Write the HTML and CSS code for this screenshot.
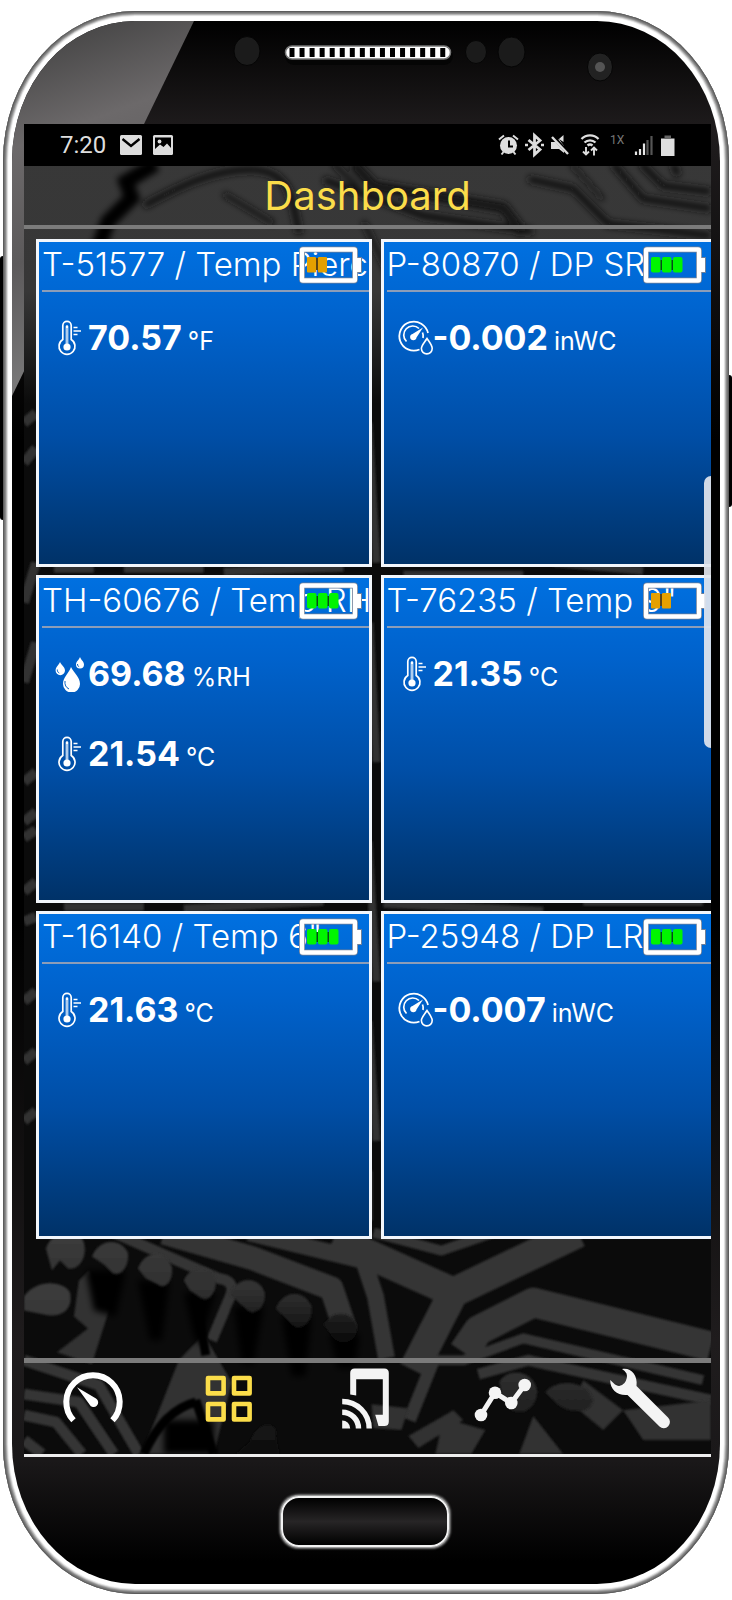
FILE: index.html
```html
<!DOCTYPE html>
<html lang="en">
<head>
<meta charset="utf-8">
<meta name="viewport" content="width=device-width, initial-scale=1">
<title>Dashboard</title>
<link rel="stylesheet" href="styles.css">
</head>
<body>
<svg class="defs" aria-hidden="true">
  <symbol id="thermo" viewBox="0 0 36 36">
    <path d="M10.800 19.500V5.500a4.200 4.200 0 0 1 8.400 0V19.500a8 8 0 1 1-8.400 0Z" fill="none" stroke="#fff" stroke-width="1.700"/>
    <path d="M15 27V6.500" fill="none" stroke="#fff" stroke-width="2.600" stroke-linecap="round"/>
    <path d="M15 24V8" fill="none" stroke="#3b85d6" stroke-width=".8"/>
    <circle cx="15" cy="27" r="3.600" fill="#fff"/>
    <path d="M21.500 7.500h4M21.500 11h7.500M21.500 14.500h4" stroke="#fff" stroke-width="1.500"/>
  </symbol>
  <symbol id="pressure" viewBox="0 0 36 36">
    <path d="M31 13A14.500 14.500 0 1 0 22.500 29.500" fill="none" stroke="#fff" stroke-width="1.800"/>
    <path d="M9.500 21.500A9 9 0 0 1 22 8.500M25.500 12.500A9 9 0 0 1 26 18" fill="none" stroke="#fff" stroke-width="1.700"/>
    <path d="M26 7.500 19.500 17.500A3.200 3.200 0 1 1 15.500 14Z" fill="#fff"/>
    <path d="M30 18.500C33 23 35.200 25.500 35.200 28.500a5.400 5.400 0 0 1-10.800 0C24.400 25.500 27 23 30 18.500Z" fill="none" stroke="#fff" stroke-width="1.600"/>
  </symbol>
  <symbol id="drops" viewBox="0 0 36 36">
    <path d="M19 11c3 6 9 10 9 17a8.500 8.500 0 0 1-17 0c0-7 6-11 8-17Z" fill="#fff"/>
    <path d="M8 6c1 3 5 5 5 8.500a4.700 4.700 0 0 1-9.400 0C3.600 11 7 9 8 6Z" fill="#fff"/>
    <path d="M28 1c1 3 4 4.500 4 7.500a4 4 0 0 1-8 0C24 5.500 27 4 28 1Z" fill="#fff"/>
    <path d="M13 25c-.5 4 1 6.500 4 8M5.300 13.500c0 2 .7 3 2 3.600M25.500 8c0 1.500.6 2.300 1.600 2.700" fill="none" stroke="#0560c4" stroke-width="1"/>
  </symbol>
  <symbol id="battery" viewBox="0 0 64 38">
    <rect x="3" y="3.500" width="53" height="31" rx="1" fill="none" stroke="#6e7f98" stroke-width="6"/>
    <path d="M57 11.500h5.500v15H57Z" fill="#fff" stroke="#6e7f98" stroke-width="1"/>
    <rect x="3" y="3.500" width="53" height="31" rx="1" fill="none" stroke="#fff" stroke-width="4.400"/>
    <path d="M56 12h6v14h-6Z" fill="#fff"/>
  </symbol>
  <symbol id="full" viewBox="0 0 64 38">
    <path d="M10 14h28v10H10Z" fill="#06491a"/>
    <rect x="8" y="11" width="9.500" height="15.500" rx="2" fill="#00f500"/>
    <rect x="19" y="11" width="9.500" height="15.500" rx="2" fill="#00f500"/>
    <rect x="30" y="11" width="9.500" height="15.500" rx="2" fill="#00f500"/>
  </symbol>
  <symbol id="half" viewBox="0 0 64 38">
    <path d="M10 12h16v12H10Z" fill="#5c4414"/>
    <rect x="8" y="11" width="9" height="15.500" rx="1" fill="#e5a000"/>
    <rect x="19" y="11" width="9" height="15.500" rx="1" fill="#e5a000"/>
  </symbol>
</svg>

<div class="device">
  <span class="side-key side-key-left"></span>
  <span class="side-key side-key-right"></span>
  <div class="phone">
    <div class="face">
      <svg class="sensors" viewBox="0 0 708 103" aria-hidden="true">
        <ellipse cx="235" cy="30" rx="13" ry="14.500" fill="#1b1b1b" stroke="#060606"/>
        <rect x="273" y="26" width="168" height="18" rx="9" fill="#050505"/>
        <rect x="273.500" y="25" width="165" height="13" rx="6.500" fill="#fff" stroke="#777" stroke-width="1.500"/>
        <path d="M277.500 31.500H436" stroke="#000" stroke-width="9" stroke-dasharray="5 5.050"/>
        <ellipse cx="464" cy="31" rx="10.500" ry="11.500" fill="#1b1b1b" stroke="#060606"/>
        <ellipse cx="499.500" cy="31" rx="13.500" ry="15" fill="#1b1b1b" stroke="#060606"/>
        <ellipse cx="588" cy="46" rx="12.500" ry="14" fill="#222" stroke="#060606"/>
        <circle cx="588" cy="46" r="5" fill="#555"/>
      </svg>

      <main class="screen">
        <svg class="circuit" viewBox="0 0 688 1334" preserveAspectRatio="none" aria-hidden="true">
          <defs>
            <filter id="soft"><feGaussianBlur stdDeviation="3"/></filter>
            <filter id="crisp"><feGaussianBlur stdDeviation="1"/></filter>
            <linearGradient id="haze" x2="0" y2="1"><stop offset="0" stop-color="#383838"/><stop offset=".6" stop-color="#373737"/><stop offset="1" stop-color="#0b0b0b"/></linearGradient>
            <linearGradient id="solder" x2="0" y2="1"><stop offset="0" stop-color="#3c3c3c"/><stop offset=".55" stop-color="#2f2f2f"/><stop offset="1" stop-color="#0b0b0b"/></linearGradient>
          </defs>
          <rect width="688" height="1334" fill="#0b0b0b"/>
          <rect width="688" height="280" fill="url(#haze)"/>
          <g filter="url(#soft)" fill="none" stroke="#121212" stroke-width="7">
            <path d="M132 40 102 58 108 74 84 98 74 125" stroke="#000" stroke-width="15"/>
            <path d="M120 82C150 66 190 44 230 46S268 80 276 110"/>
            <path d="M330 40 350 62 480 84 500 110" stroke-width="11"/>
            <path d="M300 56 400 92 510 108"/>
            <path d="M505 55 550 65 585 100 688 112"/>
            <path d="M590 40 620 75 688 85M618 40 640 62 688 68M650 40 655 52"/>
            <path d="M548 40 580 76" stroke-width="4"/>
            <path d="M200 70 250 100M310 40 335 64M340 98 365 150" stroke-width="5"/>
          </g>
          <g filter="url(#crisp)" fill="none" stroke="#303030" stroke-width="8">
            <path d="M345 300 353 440M346 500 353 640M345 720 353 860M345 900 353 1020M345 1050V1100"/>
            <path d="M30 446H70M100 446H180M200 449 320 445M380 452H500M530 440 620 448"/>
            <path d="M0 300 12 290M0 340 12 325M0 480 12 440M0 560 12 520M0 660 12 650M0 700 12 690M0 716 12 708M0 770 12 760M0 800 12 795M0 880 12 870M0 940 12 930M0 1000 12 990" stroke-width="10"/>
            <path d="M40 785H120M160 787 300 780M360 782 520 789M560 780H680"/>
          </g>
          <g filter="url(#crisp)" fill="none" stroke="#353535" stroke-linejoin="round">
            <path d="M90 1112 195 1158Q212 1160 207 1175L188 1220" stroke-width="11"/>
            <path d="M140 1112 230 1138 308 1168 322 1210" stroke-width="24"/>
            <path d="M225 1112 340 1140 352 1176 363 1238" stroke-width="17"/>
            <path d="M310 1118 430 1172 555 1112M430 1172 390 1250" stroke-width="30"/>
            <path d="M350 1112 418 1130 470 1112" stroke-width="10"/>
            <path d="M440 1232 455 1210 510 1182 688 1226" stroke-width="30"/>
            <path d="M410 1240 440 1240 500 1218 680 1260" stroke-width="10"/>
            <path d="M455 1254 505 1240 688 1280" stroke-width="11"/>
            <path d="M386 1300 412 1235" stroke-width="13"/>
            <path d="M0 1240 75 1265 115 1334M0 1274 55 1282 90 1334M0 1295 32 1302 58 1334M0 1320 18 1334" stroke-width="11"/>
          </g>
          <g filter="url(#crisp)" fill="#323232">
            <path d="M55 1160 50 1196 64 1208 33 1232 68 1244 85 1190 65 1150Z"/>
            <path d="M155 1240 180 1214 208 1262 190 1334H118Z"/>
            <path d="M348 1284 385 1288 378 1310 350 1308Z"/>
            <path d="M420 1298 462 1310 448 1334H412ZM510 1296 540 1334H496ZM560 1260 600 1290 580 1310 550 1285ZM600 1290 688 1280V1320H620Z"/>
            <path d="M385 1316 430 1290 440 1300 395 1328Z"/>
          </g>
          <path d="M171 1168 182 1235M172 1280 190 1334M120 1334Q140 1290 172 1282" stroke="#050505" stroke-width="9" fill="none" filter="url(#crisp)"/>
          <g filter="url(#soft)" fill="#050505">
            <path d="M62 1150h40l-10 46-22-6Z M114 1160h32l-8 60h-12Z M160 1172h32l-16 54-6-10Z M210 1186h30l-10 58h-12Z M258 1196h30l-6 60h-14Z M306 1214h30l-4 34h-18Z M140 1300h50v34h-50Z"/>
          </g>
          <g fill="url(#solder)" filter="url(#crisp)">
            <path d="M22 1128C28 1108 56 1108 60 1122 64 1138 54 1150 44 1148L36 1140 28 1150ZM68 1136C76 1116 98 1118 104 1132 106 1146 96 1158 88 1152L80 1144ZM114 1148C122 1128 142 1130 148 1146 150 1160 142 1170 134 1164L122 1158ZM160 1160C168 1142 188 1144 192 1158 194 1172 184 1182 178 1178L166 1170ZM206 1174C214 1154 236 1156 241 1172 243 1186 232 1196 224 1190ZM252 1188C260 1168 282 1170 288 1186 290 1204 276 1212 268 1204ZM300 1204C310 1188 330 1192 334 1206 334 1222 318 1226 310 1218Z"/>
            <path d="M0 1176C12 1158 40 1160 46 1172 50 1190 36 1198 20 1194L0 1190ZM476 1262C484 1246 512 1250 514 1272 512 1294 490 1300 480 1280ZM522 1272C536 1256 566 1262 570 1280 566 1296 544 1292 534 1284ZM226 1322C236 1296 256 1304 252 1316L256 1334H212Z"/>
          </g>
        </svg>

        <div class="statusbar">
          <span class="clock">7:20</span>
          <svg class="st-left" viewBox="0 0 54 20" aria-hidden="true">
            <rect x="0" y="0" width="22" height="20" rx="1.500" fill="#ddd"/>
            <path d="M2.500 4 11 11 19.500 4" fill="none" stroke="#000" stroke-width="2.400"/>
            <rect x="33" y="0" width="20" height="20" rx="1.500" fill="#ddd"/>
            <path d="M35 2.500H51V13L47 8.500 43.500 12 40 9.500 35 14Z" fill="#000"/>
            <circle cx="39.500" cy="6.500" r="1.900" fill="#ddd"/>
          </svg>
          <svg class="st-right" viewBox="0 0 178 22" aria-label="Alarm, Bluetooth, muted, Wi-Fi, signal, battery">
            <g fill="none" stroke="#dedede" stroke-width="2">
              <circle cx="10.500" cy="11.500" r="8.500" fill="#dedede" stroke="none"/>
              <path d="M11 6.500V12.500H15" stroke="#000"/>
              <path d="M1 5.500 6 1.500M15 1.500 20 5.500M3.500 20.500 5.500 18M17.500 20.500 15.500 18"/>
              <path d="M30.500 6 42 15.500 36.500 20.500V1.500L42 6.500 30.500 16" stroke-width="2.800"/>
              <path d="M27 11h3M43 11h3" stroke-width="2.500"/>
              <path d="M53 8h5l3-3V5L66 12V19l-5-4h-8ZM65.500 1V8L61 5Z" fill="#dedede" stroke="none"/>
              <path d="M55 2.500 70.500 19.500" stroke="#000" stroke-width="3.500"/>
              <path d="M54 3 70 20" stroke-width="2.400"/>
              <path d="M83.500 5A12 12 0 0 1 100.500 5M86.500 8.500A8 8 0 0 1 97.500 8.500M89.500 11.500A4 4 0 0 1 94.500 11.500" stroke-width="2.300"/>
              <path d="M88 13V20M85 17.500 88 20.500 91 17.500M96 21.500V14M93 16.500 96 13.500 99 16.500" stroke-width="1.900"/>
            </g>
            <text x="112" y="10" class="net">1X</text>
            <path d="M138 21V17.500M142 21V15M146 21V9.500" stroke="#e6e6e6" stroke-width="2.200"/>
            <path d="M149.500 21V6M153.500 21V2" stroke="#555" stroke-width="2.200"/>
            <path d="M163 4.500H176.500V22H163Z" fill="#dedede"/><path d="M166.500 1.500H173V4.500H166.500Z" fill="#666"/>
          </svg>
        </div>

        <header class="titlebar"><h1>Dashboard</h1></header>

        <section class="grid" aria-label="Sensors">
          <article class="card">
            <h2>T-51577 / Temp Pierc</h2>
            <svg class="battery" viewBox="0 0 64 38" aria-label="Battery medium"><use href="#half"/><use href="#battery"/></svg>
            <p class="reading"><svg><use href="#thermo"/></svg><b>70.57</b><span>°F</span></p>
          </article>
          <article class="card">
            <h2>P-80870 / DP SR</h2>
            <svg class="battery" viewBox="0 0 64 38" aria-label="Battery full"><use href="#full"/><use href="#battery"/></svg>
            <p class="reading"><svg><use href="#pressure"/></svg><b>-0.002</b><span>inWC</span></p>
          </article>
          <article class="card">
            <h2>TH-60676 / Temp RH</h2>
            <svg class="battery" viewBox="0 0 64 38" aria-label="Battery full"><use href="#full"/><use href="#battery"/></svg>
            <p class="reading"><svg><use href="#drops"/></svg><b>69.68</b><span>%RH</span></p>
            <p class="reading"><svg><use href="#thermo"/></svg><b>21.54</b><span>°C</span></p>
          </article>
          <article class="card">
            <h2>T-76235 / Temp 9"</h2>
            <svg class="battery" viewBox="0 0 64 38" aria-label="Battery medium"><use href="#half"/><use href="#battery"/></svg>
            <p class="reading"><svg><use href="#thermo"/></svg><b>21.35</b><span>°C</span></p>
          </article>
          <article class="card">
            <h2>T-16140 / Temp 6"</h2>
            <svg class="battery" viewBox="0 0 64 38" aria-label="Battery full"><use href="#full"/><use href="#battery"/></svg>
            <p class="reading"><svg><use href="#thermo"/></svg><b>21.63</b><span>°C</span></p>
          </article>
          <article class="card">
            <h2>P-25948 / DP LR</h2>
            <svg class="battery" viewBox="0 0 64 38" aria-label="Battery full"><use href="#full"/><use href="#battery"/></svg>
            <p class="reading"><svg><use href="#pressure"/></svg><b>-0.007</b><span>inWC</span></p>
          </article>
        </section>

        <nav class="tabs">
          <a href="#gauges" aria-label="Gauges"><svg viewBox="0 0 60 60"><path d="M10.500 52.300A26.700 26.700 0 1 1 49.500 52.300" fill="none" stroke="#fff" stroke-width="6"/><path d="M14 19.300 33 30.500A4.600 4.600 0 1 1 26.500 36.500Z" fill="#fff"/></svg></a>
          <a href="#dashboard" aria-label="Dashboard" aria-current="page"><svg viewBox="0 0 60 60"><g fill="none" stroke="#fbdd4a" stroke-width="4.600" stroke-linejoin="round"><rect x="8" y="10" width="15.600" height="15.400"/><rect x="34" y="10" width="15.600" height="15.400"/><rect x="8" y="36" width="15.600" height="15.400"/><rect x="34" y="36" width="15.600" height="15.400"/></g></svg></a>
          <a href="#cast" aria-label="Connect"><svg viewBox="0 0 60 60"><path d="M13.200 26.500V5Q13.200.500 17.700.500H47.300Q51.800.500 51.800 5V53.500Q51.800 58 47.300 58H41.500L38.200 46.700H45.800V11.300H19.200V27.500Z" fill="#f4f4f4"/><path d="M5.200 33.500A27 27 0 0 1 32.200 60.500M5.200 44.200A16.300 16.300 0 0 1 21.500 60.500" fill="none" stroke="#f4f4f4" stroke-width="5.400"/><path d="M5.200 52.500A8 8 0 0 1 13.200 60.500H5.200Z" fill="#f4f4f4"/></svg></a>
          <a href="#trends" aria-label="Trends"><svg viewBox="0 0 60 60"><path d="M6 47 20 24.700 36.300 35 49.700 17" fill="none" stroke="#f4f4f4" stroke-width="5"/><g fill="#f4f4f4"><circle cx="6" cy="47" r="6.300"/><circle cx="20" cy="24.700" r="6.300"/><circle cx="36.300" cy="35" r="6.300"/><circle cx="49.700" cy="17" r="6.300"/></g></svg></a>
          <a href="#settings" aria-label="Settings"><svg viewBox="0 0 60 60"><path d="M10 1C18-1 26 6 24.500 18L56 49.500A6 6 0 0 1 47.500 58.500L15.500 27C6 28-2 22-1.800 12L3 16.500Q8 20 12.500 15 16 10 14.500 5.500 13 2.500 10 1Z" fill="#f4f4f4"/></svg></a>
        </nav>

        <span class="edge-handle"></span>
      </main>

      <div class="chin"><button type="button" class="home" aria-label="Home"></button></div>
    </div>
  </div>
</div>
</body>
</html>
```
FILE: styles.css
```css
* { box-sizing: border-box; }

body {
  margin: 0;
  background: #fff;
  font-family: Inter, Roboto, "Liberation Sans", sans-serif;
  color: #fff;
}

h1, h2, p { margin: 0; }

.defs { position: absolute; width: 0; height: 0; }

.device {
  position: relative;
  padding: 11px 3px;
}

.side-key {
  position: absolute;
  width: 6px;
  background: #000;
  border-radius: 3px;
}
.side-key-left { left: 0; top: 256px; height: 264px; }
.side-key-right { right: 0; top: 375px; height: 132px; }

.phone {
  position: relative;
  padding: 10px 9px;
  border-radius: 132px / 150px;
  background: #fff;
  box-shadow:
    inset 0 0 0 1px #5c5c5c,
    inset 0 0 0 2px #757575,
    inset 0 0 0 3px #8c8c8c,
    inset 0 0 0 4px #b4b4b4,
    inset 0 0 1px 5px #dcdcdc;
}

.face {
  position: relative;
  padding: 0 9px 0 12px;
  border-radius: 123px / 140px;
  overflow: hidden;
  background:
    linear-gradient(#000, #1f1c1d 110px, #000 420px, #000 900px, #1f1c1d 1320px, #1a1819 1440px, #000 1540px);
}
.face::before {
  content: "";
  position: absolute;
  left: 0;
  top: 0;
  width: 182px;
  height: 375px;
  background: linear-gradient(160deg, #3c3c3c, #6c696a 120px, #5c5a5b 230px, #8a8a8a);
  clip-path: polygon(0 0, 100% 0, 0 100%);
}

.sensors {
  position: relative;
  display: block;
  width: calc(100% + 21px);
  margin: 0 -9px 0 -12px;
}

.screen {
  position: relative;
  display: flex;
  flex-direction: column;
  overflow: hidden;
  background: #0b0b0b;
  border-bottom: 3px solid #eee;
}
.circuit {
  position: absolute;
  left: 0;
  top: 0;
  width: 100%;
  height: 100%;
}

.statusbar {
  position: relative;
  display: flex;
  align-items: center;
  height: 42px;
  padding: 0 35px 0 36px;
  background: #000;
}
.clock {
  font: 24px/44px Roboto, sans-serif;
  color: #dedede;
  margin-right: 14px;
}
.st-left { width: 54px; height: 20px; }
.st-right { width: 178px; height: 22px; margin-left: auto; overflow: visible; }
.net { font: 12px Roboto, sans-serif; fill: #777; }

.titlebar {
  position: relative;
  border-bottom: 4px solid #7b7b7b;
}
.titlebar h1 {
  font-size: 40px;
  font-weight: 400;
  line-height: 59px;
  text-align: center;
  color: #fbdd4a;
}

.grid {
  position: relative;
  display: grid;
  grid-template-columns: 1fr 1fr;
  gap: 8px 9px;
  margin: 10px -5px 0 12px;
}

.card {
  position: relative;
  height: 328px;
  overflow: hidden;
  border: 3px solid #f2f6fb;
  background: linear-gradient(#0070e0, #0062cc 25%, #004ea6 60%, #003268);
}
.card h2 {
  margin-left: 3px;
  padding-bottom: 3px;
  border-bottom: 2px solid #8c9db8;
  font-size: 33px;
  font-weight: 300;
  line-height: 45px;
  margin-bottom: 6px;
  white-space: nowrap;
}
.battery {
  position: absolute;
  right: 6px;
  top: 4px;
  width: 64px;
  height: 38px;
}

.reading {
  display: flex;
  align-items: center;
  height: 80px;
  padding-left: 13px;
}
.reading svg {
  flex: none;
  width: 36px;
  height: 36px;
}
.reading b { font-size: 34px; font-weight: 700; line-height: 42px; }
.reading span { margin: 5px 0 0 6px; font-size: 25px; line-height: 32px; }

.tabs {
  position: relative;
  display: grid;
  grid-template-columns: repeat(5, 1fr);
  margin-top: 119px;
  border-top: 5px solid #7b7b7b;
}
.tabs a {
  display: flex;
  justify-content: center;
  padding: 5px 0 26px;
}
.tabs svg { width: 60px; height: 60px; overflow: visible; }

.edge-handle {
  position: absolute;
  right: 0;
  top: 352px;
  width: 7px;
  height: 272px;
  border-radius: 7px 0 0 7px;
  background: #e2e6ee;
  opacity: .92;
}

.chin {
  display: flex;
  justify-content: center;
  padding: 39px 6px 35px 0;
}
.home {
  width: 168px;
  height: 51px;
  margin-bottom: 2px;
  padding: 0;
  border: 2px solid #f2f2f2;
  border-radius: 18px;
  background: linear-gradient(#000, #272526 50%, #000);
  box-shadow: 0 0 0 1px #999, 0 0 2px 2px #777;
}
```
